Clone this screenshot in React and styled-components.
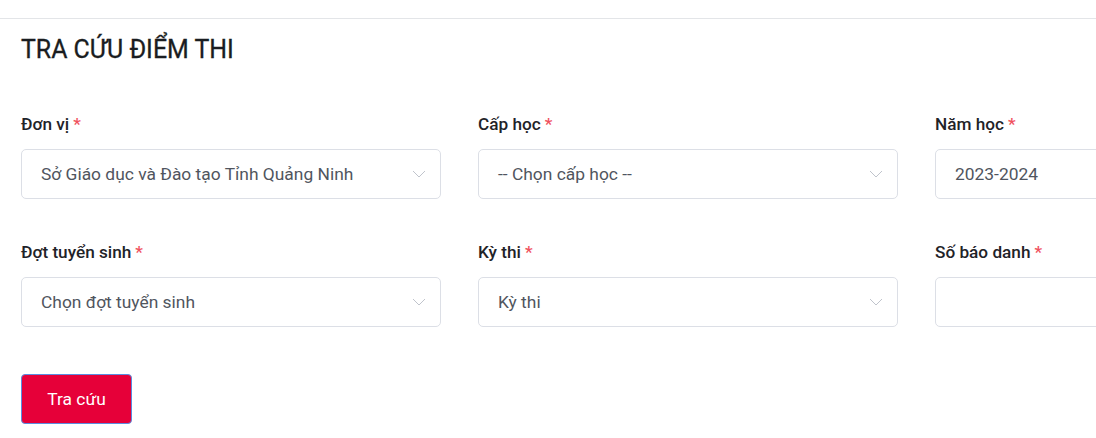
import React from 'react';
import styled, { createGlobalStyle } from 'styled-components';

const GlobalStyle = createGlobalStyle`
  body {
    margin: 0;
    background: #fff;
    font-family: Roboto, "Noto Sans", sans-serif;
    overflow: hidden;
  }
`;

const Page = styled.div`
  border-top: 1px solid #e3e5e8;
  margin-top: 18px;
  padding: 0 21px;
  width: 1400px;
`;

const Title = styled.h1`
  margin: 15px 0 0;
  font-size: 24.9px;
  font-weight: 400;
  color: #1a1d21;
  line-height: 32px;
  -webkit-text-stroke: 0.3px #1a1d21;
`;

const Grid = styled.div`
  display: grid;
  grid-template-columns: repeat(3, 420px);
  column-gap: 37px;
  row-gap: 43px;
  margin-top: 48px;
`;

const Field = styled.div`
  display: flex;
  flex-direction: column;
  gap: 15px;
`;

const Label = styled.label`
  font-size: 17.2px;
  font-weight: 500;
  color: #1f2328;
  line-height: 20px;
`;

const Star = styled.span`
  color: #f0525e;
  margin-left: 4px;
`;

const Box = styled.div`
  height: 50px;
  box-sizing: border-box;
  border: 1px solid #dcdfe6;
  border-radius: 5px;
  display: flex;
  align-items: center;
  justify-content: space-between;
  padding: 0 14px 0 19px;
  font-size: 17.4px;
  color: #50555e;
`;

const Button = styled.button`
  margin-top: 47px;
  width: 111px;
  height: 50px;
  border: 1px solid #5a8de0;
  border-radius: 4px;
  background: #e60039;
  color: #fff;
  font-family: Roboto, sans-serif;
  font-size: 17.4px;
`;

const Chevron = () => (
  <svg width="14" height="8" viewBox="0 0 14 8" fill="none">
    <path d="M1 1l6 6 6-6" stroke="#c0c4cc" strokeWidth="1" />
  </svg>
);

const fields = [
  { label: 'Đơn vị', value: 'Sở Giáo dục và Đào tạo Tỉnh Quảng Ninh', select: true },
  { label: 'Cấp học', value: '-- Chọn cấp học --', select: true },
  { label: 'Năm học', value: '2023-2024', select: true },
  { label: 'Đợt tuyển sinh', value: 'Chọn đợt tuyển sinh', select: true },
  { label: 'Kỳ thi', value: 'Kỳ thi', select: true },
  { label: 'Số báo danh', value: '', select: false },
];

export default function App() {
  return (
    <Page>
      <GlobalStyle />
      <Title>TRA CỨU ĐIỂM THI</Title>
      <Grid>
        {fields.map(f => (
          <Field key={f.label}>
            <Label>
              {f.label}
              <Star>*</Star>
            </Label>
            <Box>
              <span>{f.value}</span>
              {f.select && <Chevron />}
            </Box>
          </Field>
        ))}
      </Grid>
      <Button>Tra cứu</Button>
    </Page>
  );
}
